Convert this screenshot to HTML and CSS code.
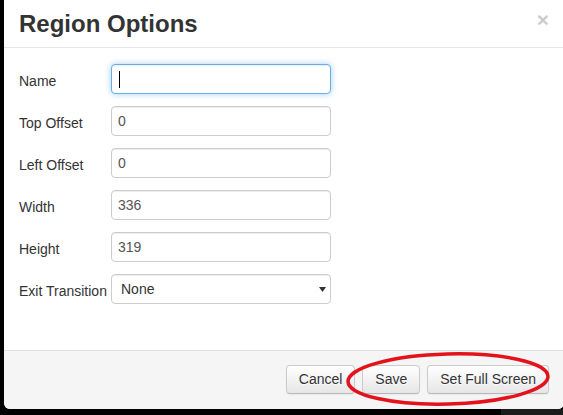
FILE: index.html
```html
<!DOCTYPE html>
<html>
<head>
<meta charset="utf-8">
<link rel="stylesheet" href="styles.css">
</head>
<body>
<div class="modal">
  <div class="modal-header">
    <h3 class="modal-title">Region Options</h3>
    <span class="close">×</span>
  </div>
  <div class="modal-body">
    <div class="form-row">
      <label class="label">Name</label>
      <div class="field">
        <input class="input focused" type="text" value="">
        <span class="caret"></span>
      </div>
    </div>
    <div class="form-row">
      <label class="label">Top Offset</label>
      <input class="input" type="text" value="0">
    </div>
    <div class="form-row">
      <label class="label">Left Offset</label>
      <input class="input" type="text" value="0">
    </div>
    <div class="form-row">
      <label class="label">Width</label>
      <input class="input" type="text" value="336">
    </div>
    <div class="form-row">
      <label class="label">Height</label>
      <input class="input" type="text" value="319">
    </div>
    <div class="form-row">
      <label class="label">Exit Transition</label>
      <div class="field">
        <select class="input select"><option>None</option></select>
        <svg class="select-arrow" width="7" height="5" viewBox="0 0 7 5"><path d="M0 0H7L3.5 5Z" fill="#333"/></svg>
      </div>
    </div>
  </div>
  <div class="modal-footer">
    <button class="btn">Cancel</button>
    <button class="btn">Save</button>
    <button class="btn">Set Full Screen</button>
  </div>
  <svg class="annotation" width="210" height="60" viewBox="0 0 210 60">
    <ellipse cx="104" cy="29" rx="100" ry="25" fill="none" stroke="#e3121c" stroke-width="3.5" transform="rotate(-1.5 104 29)"/>
  </svg>
</div>
<div class="bottom-strip"><div class="bottom-gray"></div></div>
</body>
</html>
```

FILE: styles.css
```css
html, body {
  margin: 0;
  padding: 0;
  background: #000;
  height: 100%;
  overflow: hidden;
}

body {
  font-family: "Liberation Sans", Arial, sans-serif;
  font-size: 14px;
  color: #333;
}

.modal {
  position: relative;
  margin-left: 4px;
  width: 560px;
  background: #fff;
  border-radius: 0 0 6px 6px;
}

.modal-header {
  display: flex;
  justify-content: space-between;
  align-items: flex-start;
  padding: 9px 15px 8px 15px;
  border-bottom: 1px solid #e5e5e5;
}

.modal-title {
  margin: 0;
  font-size: 24px;
  line-height: 30px;
  font-weight: bold;
  color: #333;
}

.close {
  font-size: 21px;
  font-weight: bold;
  line-height: 1;
  color: #000;
  opacity: 0.2;
  margin-top: 0;
  margin-right: 0;
}

.modal-body {
  padding: 16px 15px 46px 15px;
}

.form-row {
  display: grid;
  grid-template-columns: 92px 220px;
  margin-bottom: 12px;
}

.form-row:last-child {
  margin-bottom: 0;
}

.label {
  padding-top: 7px;
  line-height: 20px;
  color: #333;
  white-space: nowrap;
}

.field {
  position: relative;
}

.input {
  box-sizing: border-box;
  width: 220px;
  height: 30px;
  padding: 5px 6px;
  font-family: "Liberation Sans", Arial, sans-serif;
  font-size: 14px;
  line-height: 18px;
  color: #555;
  background: #fff;
  border: 1px solid #ccc;
  border-radius: 4px;
  box-shadow: inset 0 1px 1px rgba(0, 0, 0, 0.075);
  outline: none;
  margin: 0;
}

.input.focused {
  border-color: #66afe9;
  box-shadow: inset 0 1px 1px rgba(0, 0, 0, 0.075), 0 0 6px rgba(102, 175, 233, 0.6);
}

.caret {
  position: absolute;
  left: 8px;
  top: 7px;
  width: 1px;
  height: 17px;
  background: #000;
}

.select {
  appearance: none;
  -webkit-appearance: none;
  padding: 4px 9px;
  color: #333;
}

.select-arrow {
  position: absolute;
  right: 5px;
  top: 13px;
}

.modal-footer {
  display: flex;
  justify-content: flex-end;
  gap: 7px;
  padding: 14px 15px 15px 15px;
  background: #f5f5f5;
  border-top: 1px solid #e2e2e2;
  border-radius: 0 0 6px 6px;
}

.btn {
  font-family: "Liberation Sans", Arial, sans-serif;
  font-size: 14px;
  line-height: 19px;
  color: #333;
  padding: 4px 12px;
  border: 1px solid #ccc;
  border-bottom-color: #b8b8b8;
  border-radius: 4px;
  background: linear-gradient(#ffffff, #e6e6e6);
  box-shadow: inset 0 1px 0 rgba(255, 255, 255, 0.2), 0 1px 2px rgba(0, 0, 0, 0.05);
  text-shadow: 0 1px 1px rgba(255, 255, 255, 0.75);
  margin: 0;
}

.annotation {
  position: absolute;
  left: 340px;
  top: 350px;
}

.bottom-strip {
  height: 10px;
  display: flex;
  justify-content: flex-end;
}

.bottom-gray {
  width: 62px;
  height: 10px;
  background: #1c1c1c;
}
```
